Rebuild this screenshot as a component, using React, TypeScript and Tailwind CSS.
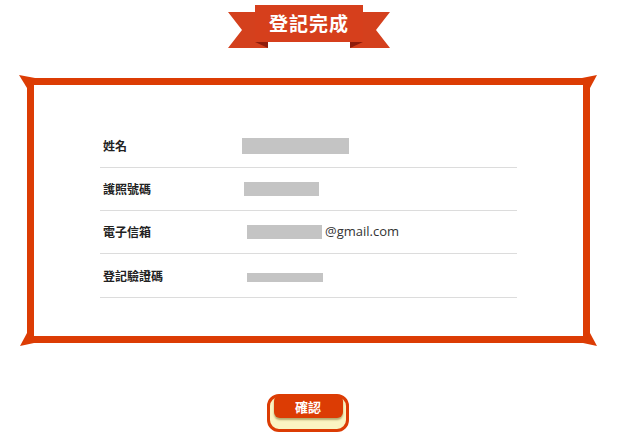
const rows = [
  { label: "姓名", box: "ml-[139px] w-[107px] h-[16px]" },
  { label: "護照號碼", box: "ml-[141px] w-[75px] h-[14px]" },
  { label: "電子信箱", box: "ml-[144px] w-[75px] h-[14px]", suffix: "@gmail.com" },
  { label: "登記驗證碼", box: "ml-[144px] w-[76px] h-[9px] mt-[4px]" },
];

function Ribbon() {
  return (
    <div className="relative w-[162px] h-[46px] ml-[228px] mt-[5px]">
      <svg width="162" height="46" viewBox="0 0 162 46" className="absolute inset-0">
        <polygon points="0,7 40,7 40,43 0,43 14,25" fill="#d4401d" />
        <polygon points="162,7 122,7 122,43 162,43 148,25" fill="#d4401d" />
        <polygon points="27,37 40,37 40,43" fill="#8e1c0b" />
        <polygon points="135,37 122,37 122,43" fill="#8e1c0b" />
        <rect x="27" y="0" width="108" height="37" fill="#d63f1c" />
      </svg>
      <div className="relative h-[37px] flex items-center justify-center text-white text-[19px] font-bold tracking-[1px] font-['Noto_Sans_CJK_TC',sans-serif]">
        登記完成
      </div>
    </div>
  );
}

function Spike({ className, points }: { className: string; points: string }) {
  return (
    <svg width="20" height="20" viewBox="0 0 20 20" className={`absolute ${className}`}>
      <polygon points={points} fill="#dc3c04" />
    </svg>
  );
}

export default function App() {
  return (
    <div className="w-[620px] h-[447px] bg-white overflow-hidden font-['Noto_Sans_CJK_TC',sans-serif]">
      <Ribbon />
      <div className="relative ml-[27px] mt-[27px] w-[563px] h-[265px] border-[7px] border-[#dc3c04]">
        <Spike className="left-[-15px] top-[-11px]" points="0,1 16,4 8,14" />
        <Spike className="left-[546px] top-[-11px]" points="17,1 2,4 10,14" />
        <Spike className="left-[-15px] top-[245px]" points="1,16 8,3 15,13" />
        <Spike className="left-[546px] top-[245px]" points="17,16 10,3 3,13" />
        <div className="ml-[66px] mt-[39px] w-[417px] flex flex-col">
          {rows.map((r, i) => (
            <div
              key={r.label}
              className={`flex items-center border-b border-[#dcdcdc] pl-[3px] ${i === 3 ? "h-[44px]" : "h-[43px]"} ${i === 0 ? "pt-[1px] h-[44px]" : ""}`}
            >
              <div className="w-[0px] whitespace-nowrap text-[12px] font-semibold text-[#222]">
                {r.label}
              </div>
              <div className={`bg-[#c4c4c4] ${r.box}`} />
              {r.suffix && (
                <span className="text-[13px] text-[#333] font-['Open_Sans',sans-serif] ml-[3px]">
                  {r.suffix}
                </span>
              )}
            </div>
          ))}
        </div>
      </div>
      <div className="ml-[267px] mt-[51px] w-[82px] h-[38px] rounded-[12px] border-[3px] border-[#dc3c04] bg-[#fbf4c2] flex justify-center">
        <div className="-mt-[2px] w-[69px] h-[23px] rounded-[6px] bg-[#dc3c04] shadow-[0_2px_2px_#b6a86a] flex items-center justify-center text-white text-[13px] font-bold">
          確認
        </div>
      </div>
    </div>
  );
}
